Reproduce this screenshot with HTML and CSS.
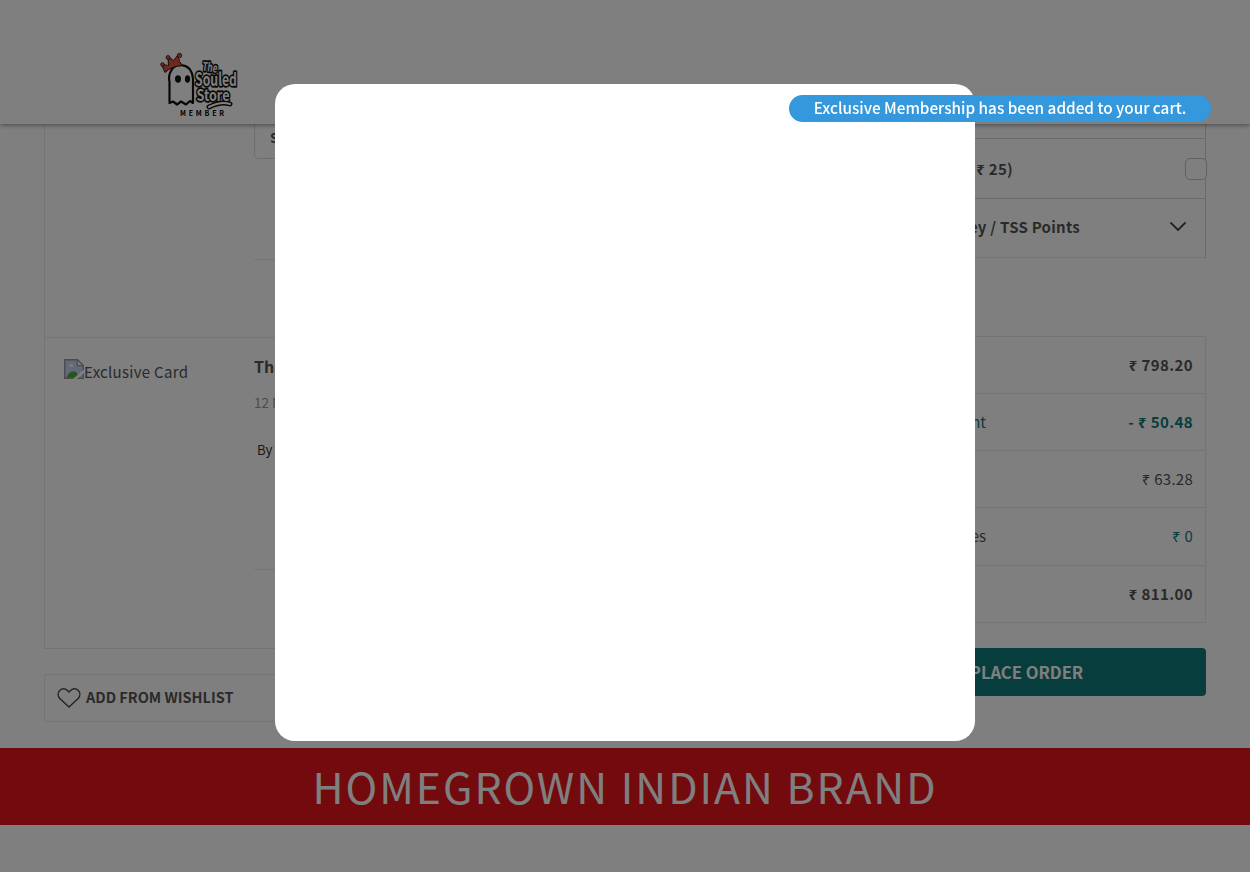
FILE: index.html
```html
<!DOCTYPE html>
<html lang="en">
<head>
<meta charset="utf-8">
<title>The Souled Store - Cart</title>
<link rel="stylesheet" href="styles.css">
</head>
<body>
<div class="page">
  <header class="header">
    <svg class="logo" viewBox="0 0 80 66" width="80" height="66">
      <path d="M9.500 51V30Q8 24 11 19Q14 13 21 13Q32 14 33 27V51L30 49L26 52.500L21 49.500L17 52.500L13 49.500Z" fill="#fff" stroke="#111" stroke-width="2.200" stroke-linejoin="round"/>
      <ellipse cx="18" cy="27" rx="3" ry="3.700" fill="#111"/>
      <ellipse cx="27.500" cy="27" rx="2.600" ry="3.700" fill="#111"/>
      <path d="M5 20.500L1.500 12.500L8.500 13.500L8 4.500L13.500 8.500L18 3L19.500 9.500L22.500 13.500Q12 14 5 20.500Z" fill="#d9553c" stroke="#2a1512" stroke-width="1" stroke-linejoin="round"/>
      <g fill="#d9553c" stroke="#2a1512" stroke-width=".8"><circle cx="2.500" cy="12.500" r="1.800"/><circle cx="8" cy="5.500" r="2"/><circle cx="19.500" cy="3.500" r="2.200"/></g>
      <path d="M6.500 17L5 12L10 14.500L9 8L14.500 11L18.500 6L18.500 12Q11 13 6.500 17Z" fill="#d9553c"/>
      <path d="M49 55Q61 49 70 52" fill="none" stroke="#111" stroke-width="5" stroke-linecap="round"/>
      <g class="logo-words">
        <text x="42" y="18.500" font-size="12" textLength="15" lengthAdjust="spacingAndGlyphs" transform="rotate(8 42 18.500)">The</text>
        <text x="35" y="33.500" font-size="18" textLength="42" lengthAdjust="spacingAndGlyphs">Souled</text>
        <text x="36.500" y="49" font-size="16" textLength="33" lengthAdjust="spacingAndGlyphs">Store</text>
      </g>
      <path d="M49 55Q61 49 70 52" fill="none" stroke="#fff" stroke-width="2" stroke-linecap="round"/>
      <text class="logo-member" x="20" y="63.500" textLength="44">MEMBER</text>
    </svg>
  </header>

  <main class="cart">
    <section class="items">
      <div class="card">
        <article class="item item-first">
          <div class="thumb"></div>
          <div class="details">
            <div class="size">Size</div>
            <div class="rule rule-first"></div>
          </div>
        </article>
        <article class="item item-second">
          <div class="thumb">
            <svg class="broken" width="20" height="20" viewBox="0 0 20 20">
              <path d="M.700 .700H13.500L19.300 6.500V19.300H.700Z" fill="#c5d5f5" stroke="#999" stroke-width="1.400"/>
              <path d="M13.300 .700V6.600H19.300Z" fill="#fff" stroke="#999" stroke-width="1.200"/>
              <path d="M4 7.500Q4.500 6 6 6Q7 3.500 8.500 6Q10 6 10 7.500Z" fill="#fff"/>
              <path d="M2 18.700Q7 10 12 13Q14 15 15 18.700Z" fill="#4caf35"/>
              <path d="M9 20L20 10.500V14L13 20Z" fill="#fff"/>
            </svg><span>Exclusive Card</span>
          </div>
          <div class="details">
            <h2 class="name">The Souled Store</h2>
            <p class="duration">12 Months</p>
            <p class="seller">By the Souled</p>
            <div class="rule rule-second"></div>
          </div>
        </article>
      </div>
      <div class="wishlist">
        <svg width="24" height="20" viewBox="0 0 24 20"><path d="M12 19L2.800 10.500C-2.300 4.500 5.500-3 11 3L12 4L13 3C18.500-3 26.300 4.500 21.200 10.500Z" fill="none" stroke="#444" stroke-width="1.400" stroke-linejoin="round"/></svg>
        <span>ADD FROM WISHLIST</span>
      </div>
    </section>

    <aside class="side">
      <div class="options">
        <div class="option option-cut"></div>
        <div class="option option-gift"><span>Gift Wrap (₹ 25)</span><i class="check"></i></div>
        <div class="option option-points"><span>TSS Money / TSS Points</span>
          <svg width="18" height="11" viewBox="0 0 18 11"><path d="M1.500 1.500L9 9L16.500 1.500" fill="none" stroke="#444" stroke-width="1.800"/></svg>
        </div>
      </div>
      <div class="summary">
        <div class="line"><span></span><b>₹ 798.20</b></div>
        <div class="line saving"><span>Member Discount</span><b>- ₹ 50.48</b></div>
        <div class="line"><span></span><em>₹ 63.28</em></div>
        <div class="line line-tall"><span>Shipping Charges</span><em class="free">₹ 0</em></div>
        <div class="line"><span></span><b>₹ 811.00</b></div>
      </div>
      <button class="order">PLACE ORDER</button>
    </aside>
  </main>
  <footer class="brand"><span>HOMEGROWN INDIAN BRAND</span></footer>
</div>
<div class="overlay"></div>
<div class="modal"></div>
<div class="toast"><span>Exclusive Membership has been added to your cart.</span></div>
</body>
</html>
```
FILE: styles.css
```css
* { box-sizing: border-box; }
body {
  margin: 0;
  height: 872px;
  overflow: hidden;
  background: #fff;
  color: #555;
  font-family: "Noto Sans CJK SC", "Noto Sans", sans-serif;
  font-size: 15px;
}
h2, p { margin: 0; }
.page { height: 872px; overflow: hidden; }

.header {
  position: relative;
  z-index: 1;
  height: 124px;
  padding: 52px 0 0 160px;
  background: #fff;
  box-shadow: 0 1px 5px rgba(0, 0, 0, .45);
}
.logo { display: block; overflow: visible; }
.logo text { font-weight: 700; }
.logo-words {
  fill: #fff;
  stroke: #111;
  stroke-width: 3.6;
  stroke-linejoin: round;
  paint-order: stroke;
}
.logo-member { font-size: 7px; fill: #000; }

.cart {
  display: flex;
  justify-content: space-between;
  height: 624px;
  padding: 0 44px;
}
.items { width: 778px; }
.card { height: 525px; border: 1px solid #e8e8e8; border-top: 0; }
.item { display: flex; padding-left: 19px; }
.item-first { height: 214px; border-bottom: 1px solid #e8e8e8; }
.thumb { display: flex; width: 190px; flex: none; }
.details { flex: 1; }
.size {
  width: 110px;
  height: 35px;
  padding: 4px 0 0 15px;
  border: 1px solid #dcdcdc;
  border-top: 0;
  border-radius: 0 0 5px 5px;
  font-size: 13px;
  font-weight: 700;
  line-height: 20px;
}
.rule { height: 1px; background: #eaeaea; }
.rule-first { margin-top: 100px; }
.item-second .thumb { padding-top: 21px; line-height: 26px; letter-spacing: .3px; }
.broken { flex: none; }
.name { margin-top: 16px; font-size: 16px; line-height: 24px; }
.duration { margin-top: 12px; color: #999; font-size: 13.5px; line-height: 24px; }
.seller { margin: 24px 0 0 3px; color: #333; font-size: 13.2px; line-height: 24px; }
.rule-second { margin-top: 107px; }
.wishlist {
  display: flex;
  align-items: center;
  gap: 5px;
  height: 48px;
  margin-top: 25px;
  padding-left: 12px;
  border: 1px solid #e8e8e8;
  font-size: 14.5px;
  font-weight: 700;
}
.wishlist span { padding-bottom: 3px; }

.side { width: 359px; }
.options {
  height: 134px;
  margin-bottom: 78px;
  border-right: 1px solid #d4d4d4;
  border-left: 1px solid #d4d4d4;
  font-weight: 700;
}
.option { display: flex; align-items: center; justify-content: space-between; border-bottom: 1px solid #d4d4d4; }
.option span { text-align: right; white-space: nowrap; }
.option-cut { height: 15px; }
.option-gift { height: 60px; }
.option-gift span { width: 165px; letter-spacing: .3px; }
.option-points { height: 59px; padding: 0 18px 4px 0; border-color: #e8e8e8; }
.option-points span { width: 232px; letter-spacing: .25px; }
.check {
  width: 22px;
  height: 22px;
  margin-right: -2px;
  border: 1px solid #c4c4c4;
  border-radius: 5px;
  background: #fff;
}
.summary { border: 1px solid #e8e8e8; }
.line {
  display: flex;
  align-items: center;
  justify-content: space-between;
  height: 57px;
  padding: 0 12px 2px 0;
  border-bottom: 1px solid #e8e8e8;
}
.line:last-child { height: 56px; padding-bottom: 1px; border-bottom: 0; }
.line-tall { height: 58px; }
.line span { width: 138px; text-align: right; white-space: nowrap; }
.line em { font-style: normal; letter-spacing: .25px; }
.line b { letter-spacing: .4px; }
.saving, .free { color: #117a7a; }
.order {
  display: block;
  width: 100%;
  height: 48px;
  margin-top: 25px;
  padding: 0;
  border: 0;
  border-radius: 4px;
  background: #117a7a;
  color: #fff;
  font: 700 16.6px/48px "Noto Sans CJK SC", sans-serif;
}

.brand {
  height: 77px;
  background: #e6141a;
  color: #fff;
  font-size: 42.7px;
  line-height: 74px;
  letter-spacing: 2px;
  text-align: center;
  white-space: nowrap;
}

.overlay { position: fixed; inset: 0; z-index: 5; background: rgba(0, 0, 0, .5); }
.modal {
  position: fixed;
  z-index: 6;
  top: 84px;
  left: 275px;
  width: 700px;
  height: 657px;
  border-radius: 20px;
  background: #fff;
}
.toast {
  position: fixed;
  z-index: 7;
  top: 95px;
  left: 789px;
  width: 422px;
  height: 27px;
  border-radius: 14px;
  background: #3598dc;
  color: #fff;
  font-size: 15.3px;
  font-weight: 500;
  line-height: 24px;
  text-align: center;
  white-space: nowrap;
}
```
